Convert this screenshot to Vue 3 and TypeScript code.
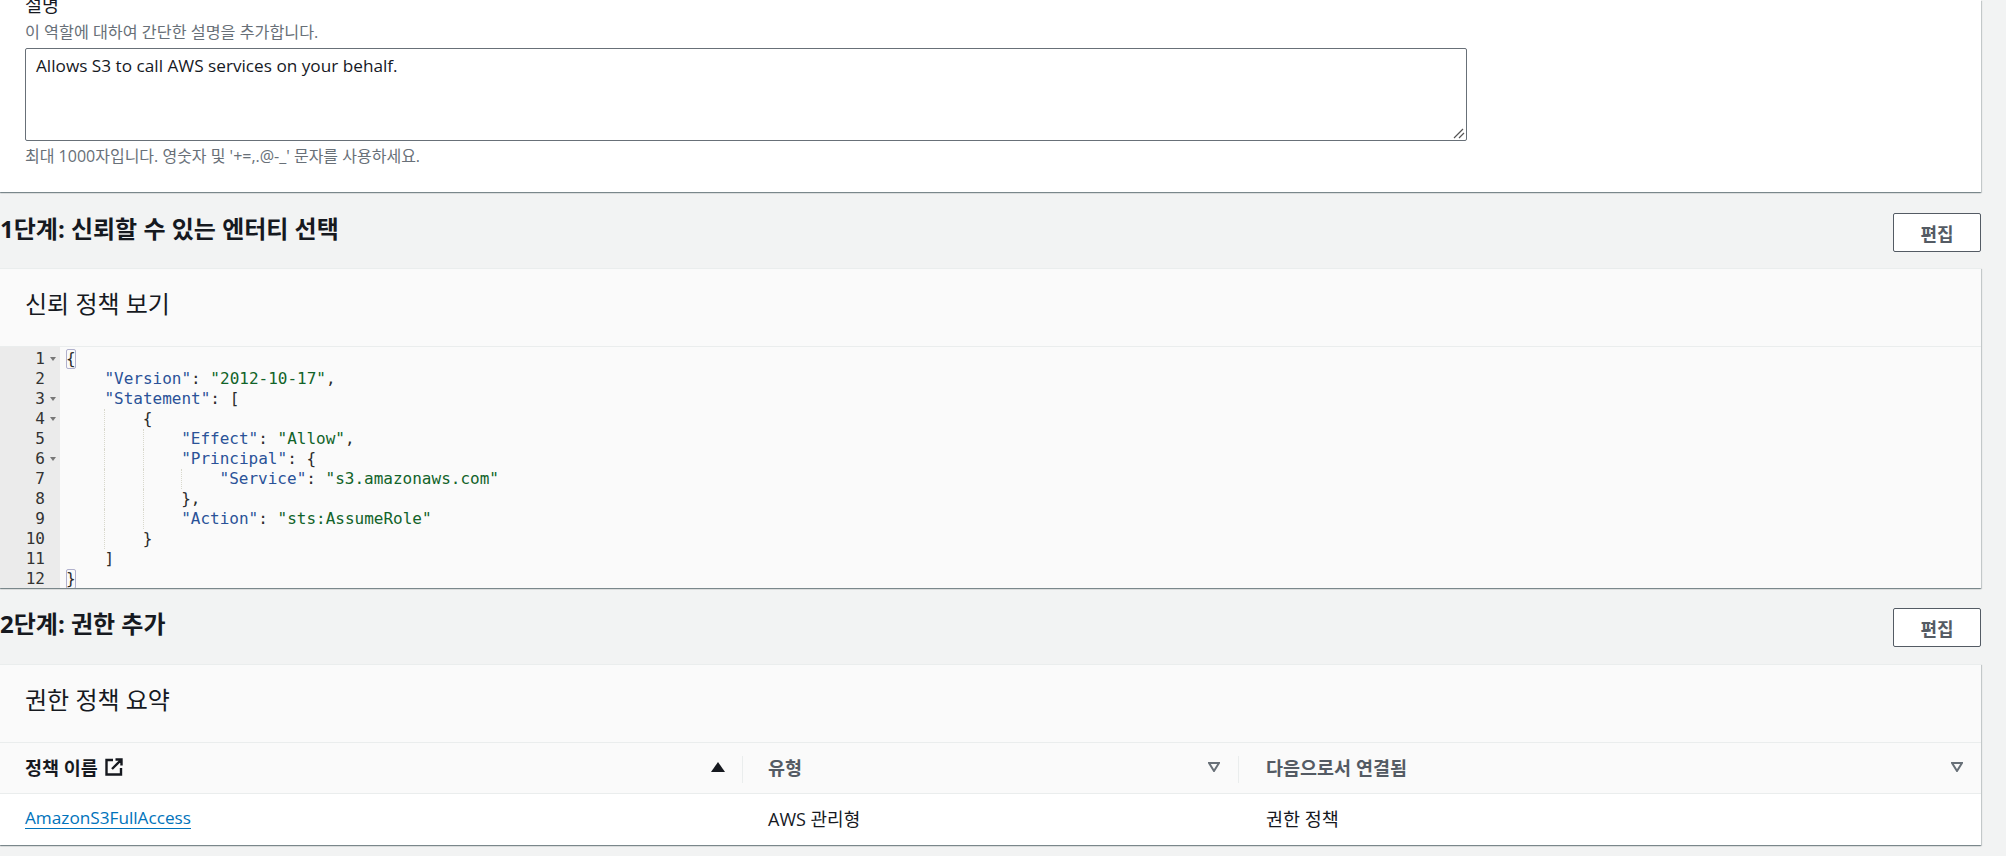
<script setup lang="ts">
type Tok = { t: string; c: string };
type Line = { indent: number; fold: boolean; toks: Tok[]; box?: boolean };
const k = "key", s = "str", p = "pun";
const lines: Line[] = [
  { indent: 0, fold: true, box: true, toks: [{ t: "{", c: p }] },
  { indent: 1, fold: false, toks: [{ t: '"Version"', c: k }, { t: ": ", c: p }, { t: '"2012-10-17"', c: s }, { t: ",", c: p }] },
  { indent: 1, fold: true, toks: [{ t: '"Statement"', c: k }, { t: ": ", c: p }, { t: "[", c: p }] },
  { indent: 2, fold: true, toks: [{ t: "{", c: p }] },
  { indent: 3, fold: false, toks: [{ t: '"Effect"', c: k }, { t: ": ", c: p }, { t: '"Allow"', c: s }, { t: ",", c: p }] },
  { indent: 3, fold: true, toks: [{ t: '"Principal"', c: k }, { t: ": ", c: p }, { t: "{", c: p }] },
  { indent: 4, fold: false, toks: [{ t: '"Service"', c: k }, { t: ": ", c: p }, { t: '"s3.amazonaws.com"', c: s }] },
  { indent: 3, fold: false, toks: [{ t: "},", c: p }] },
  { indent: 3, fold: false, toks: [{ t: '"Action"', c: k }, { t: ": ", c: p }, { t: '"sts:AssumeRole"', c: s }] },
  { indent: 2, fold: false, toks: [{ t: "}", c: p }] },
  { indent: 1, fold: false, toks: [{ t: "]", c: p }] },
  { indent: 0, fold: false, box: true, toks: [{ t: "}", c: p }] },
];
const cols = [{ name: "유형" }, { name: "다음으로서 연결됨" }];
</script>

<template>
  <div class="page">
    <section class="panel top">
      <div class="label">설명</div>
      <div class="hint">이 역할에 대하여 간단한 설명을 추가합니다.</div>
      <div class="area">
        Allows S3 to call AWS services on your behalf.
        <svg class="grip" width="12" height="12" viewBox="0 0 12 12">
          <path d="M1 11 L10 2 M6 11 L11 6" stroke="#555" stroke-width="1.2" fill="none" />
        </svg>
      </div>
      <div class="hint after">최대 1000자입니다. 영숫자 및 '+=,.@-_' 문자를 사용하세요.</div>
    </section>

    <header class="step">
      <h2>1단계: 신뢰할 수 있는 엔터티 선택</h2>
      <button class="edit">편집</button>
    </header>
    <section class="panel card">
      <div class="card-title">신뢰 정책 보기</div>
      <div class="editor">
        <div class="gutter">
          <div v-for="(l, i) in lines" :key="i" class="gl">
            <span class="num">{{ i + 1 }}</span>
            <span class="fold"><i v-if="l.fold"></i></span>
          </div>
        </div>
        <div class="code">
          <div v-for="(l, i) in lines" :key="i" class="cl">
            <span v-for="n in l.indent" :key="n" class="ind" :class="{ guide: n > 1 }"></span>
            <span v-for="(t, j) in l.toks" :key="j" :class="[t.c, { box: l.box }]">{{ t.t }}</span>
          </div>
        </div>
      </div>
    </section>

    <header class="step second">
      <h2>2단계: 권한 추가</h2>
      <button class="edit">편집</button>
    </header>
    <section class="panel card">
      <div class="card-title">권한 정책 요약</div>
      <div class="thead">
        <div class="th first-col">
          <span class="strong">정책 이름</span>
          <svg class="ext" width="18" height="18" viewBox="0 0 18 18" fill="none" stroke="#16191f" stroke-width="2.4">
            <path d="M8 2 H1.500 V16.500 H16 V10" />
            <path d="M7 11 L16 2 M10.500 1.500 H16.500 V7.500" />
          </svg>
          <svg class="sort" width="14" height="10" viewBox="0 0 14 10"><path d="M7 0 L14 10 H0 Z" fill="#16191f" /></svg>
        </div>
        <div v-for="c in cols" :key="c.name" class="th">
          <span class="sep"></span>
          <span class="muted">{{ c.name }}</span>
          <svg class="sort" width="12" height="10" viewBox="0 0 12 10"><path d="M1 1 H11 L6 9 Z" fill="none" stroke="#687078" stroke-width="2" /></svg>
        </div>
      </div>
      <div class="trow">
        <div class="td first-col"><a class="link">AmazonS3FullAccess</a></div>
        <div class="td mixed">AWS 관리형</div>
        <div class="td ko">권한 정책</div>
      </div>
    </section>
  </div>
</template>

<style scoped>
.page {
  width: 2006px;
  height: 856px;
  overflow: hidden;
  background: #f2f3f3;
  font-family: "Open Sans", "Noto Sans CJK KR", sans-serif;
  color: #16191f;
  font-size: 17.2px;
}
.panel {
  width: 1981px;
  box-sizing: border-box;
  box-shadow: 0 1px 1px 0 rgba(0, 28, 36, 0.3), 1px 1px 1px 0 rgba(0, 28, 36, 0.15), -1px 1px 1px 0 rgba(0, 28, 36, 0.15);
}
.top {
  display: flow-root;
  height: 192px;
  background: #fff;
  padding: 0 25px;
}
.label {
  height: 22px;
  line-height: 22px;
  margin-top: -6px;
  font-size: 18.500px;
}
.hint {
  font-size: 16.200px;
  line-height: 20px;
  color: #687078;
  padding-top: 6px;
  height: 32px;
  box-sizing: border-box;
}
.area {
  position: relative;
  width: 1442px;
  height: 93px;
  box-sizing: border-box;
  border: 1px solid #687078;
  border-radius: 2px;
  padding: 6px 10px;
  line-height: 22px;
}
.grip {
  position: absolute;
  right: 1px;
  bottom: 1px;
}
.hint.after {
  padding-top: 5px;
  font-size: 16px;
}
.step {
  height: 76px;
  width: 1981px;
  display: flex;
  align-items: flex-start;
  justify-content: space-between;
  padding-top: 21px;
  box-sizing: border-box;
}
.step.second {
  padding-top: 20px;
}
h2 {
  margin: 1px 0 0;
  font-size: 24px;
  font-weight: 700;
  line-height: 30px;
}
.edit {
  width: 88px;
  height: 39px;
  background: #fff;
  border: 1px solid #545b64;
  border-radius: 2px;
  color: #545b64;
  font: 700 18px "Open Sans", "Noto Sans CJK KR", sans-serif;
  padding: 0;
}
.card {
  background: #fafafa;
  border-top: 1px solid #eaeded;
}
.card-title {
  height: 78px;
  box-sizing: border-box;
  padding-left: 25px;
  font-size: 24px;
  line-height: 70px;
  border-bottom: 1px solid #eaeded;
}
.editor {
  display: flex;
  height: 241px;
  overflow: hidden;
  font-family: "DejaVu Sans Mono", monospace;
  font-size: 16px;
  line-height: 20px;
}
.gutter {
  width: 60px;
  padding-top: 2px;
  background: #ebebeb;
  color: #333;
  flex: none;
}
.gl {
  height: 20px;
  display: flex;
  justify-content: flex-end;
  align-items: center;
  padding-right: 2px;
}
.num {
  margin-right: 3px;
}
.fold {
  width: 10px;
  display: flex;
  justify-content: center;
}
.fold i {
  width: 0;
  height: 0;
  border-left: 3.5px solid transparent;
  border-right: 3.5px solid transparent;
  border-top: 4px solid #777;
}
.code {
  padding: 2px 0 0 6px;
  white-space: pre;
  color: #222;
}
.cl {
  height: 20px;
  display: flex;
  align-items: stretch;
}
.ind {
  width: 38.4px;
  flex: none;
  box-sizing: border-box;
}
.guide {
  border-left: 1px dotted #d8d8cc;
}
.key {
  color: #2a5298;
}
.str {
  color: #116329;
}
.pun {
  color: #2b2b2b;
}
.box {
  outline: 1px solid #b0b0cc;
  outline-offset: -1px;
  border-radius: 2px;
}
.thead {
  display: grid;
  grid-template-columns: 742px 496px 1fr;
  height: 51px;
  border-bottom: 1px solid #eaeded;
  box-sizing: border-box;
}
.th {
  position: relative;
  display: flex;
  align-items: center;
  padding: 0 18px 2px 26px;
  font-size: 18.500px;
  font-weight: 700;
  gap: 7px;
}
.th.first-col {
  padding: 0 17px 2px 25px;
}
.th:last-child {
  padding-left: 28px;
}
.muted {
  color: #545b64;
}
.ext {
  flex: none;
}
.sort {
  margin-left: auto;
}
.sep {
  position: absolute;
  left: 0;
  top: 13px;
  height: 27px;
  width: 1px;
  background: #eaeded;
}
.trow {
  display: grid;
  grid-template-columns: 742px 496px 1fr;
  height: 51px;
  background: #fff;
  align-items: center;
}
.td {
  padding: 0 0 4px 26px;
}
.td.first-col {
  padding-left: 25px;
}
.td.mixed {
  font-size: 18px;
}
.td.ko {
  padding-left: 28px;
  font-size: 18.500px;
}
.link {
  color: #0073bb;
  text-decoration: underline;
  text-underline-offset: 4px;
}
</style>
